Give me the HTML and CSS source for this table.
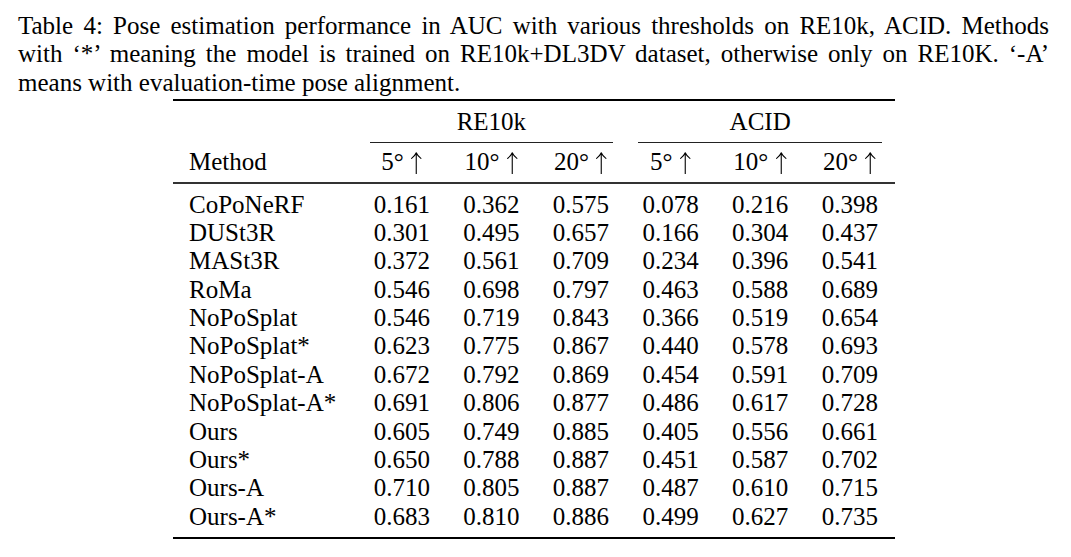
FILE: index.html
```html
<!DOCTYPE html>
<html>
<head>
<meta charset="utf-8">
<link rel="stylesheet" href="styles.css">
</head>
<body>
<div class="page">
  <p class="caption">
    <span class="line just">Table 4: Pose estimation performance in AUC with various thresholds on RE10k, ACID. Methods</span>
    <span class="line just">with ‘*’ meaning the model is trained on RE10k+DL3DV dataset, otherwise only on RE10K. ‘-A’</span>
    <span class="line">means with evaluation-time pose alignment.</span>
  </p>
  <div class="table">
    <div class="rule heavy top"></div>
    <div class="row head1">
      <div class="cell"></div>
      <div class="cell group">RE10k</div>
      <div class="cell group">ACID</div>
    </div>
    <div class="row cmids">
      <div class="cell"></div>
      <div class="cm"></div>
      <div class="cm"></div>
    </div>
    <div class="row head2">
      <div class="cell method">Method</div>
      <div class="cell num">5° <svg class="up" viewBox="0 0 12.5 22" aria-label="↑"><path d="M6.25 1.2V22M1.6 6.4C3.6 4.9 5.2 3.2 6.25 0.8C7.3 3.2 8.9 4.9 10.9 6.4"/></svg></div>
      <div class="cell num">10° <svg class="up" viewBox="0 0 12.5 22" aria-label="↑"><path d="M6.25 1.2V22M1.6 6.4C3.6 4.9 5.2 3.2 6.25 0.8C7.3 3.2 8.9 4.9 10.9 6.4"/></svg></div>
      <div class="cell num">20° <svg class="up" viewBox="0 0 12.5 22" aria-label="↑"><path d="M6.25 1.2V22M1.6 6.4C3.6 4.9 5.2 3.2 6.25 0.8C7.3 3.2 8.9 4.9 10.9 6.4"/></svg></div>
      <div class="cell num">5° <svg class="up" viewBox="0 0 12.5 22" aria-label="↑"><path d="M6.25 1.2V22M1.6 6.4C3.6 4.9 5.2 3.2 6.25 0.8C7.3 3.2 8.9 4.9 10.9 6.4"/></svg></div>
      <div class="cell num">10° <svg class="up" viewBox="0 0 12.5 22" aria-label="↑"><path d="M6.25 1.2V22M1.6 6.4C3.6 4.9 5.2 3.2 6.25 0.8C7.3 3.2 8.9 4.9 10.9 6.4"/></svg></div>
      <div class="cell num">20° <svg class="up" viewBox="0 0 12.5 22" aria-label="↑"><path d="M6.25 1.2V22M1.6 6.4C3.6 4.9 5.2 3.2 6.25 0.8C7.3 3.2 8.9 4.9 10.9 6.4"/></svg></div>
    </div>
    <div class="rule mid"></div>
    <div class="tbody">
      <div class="row"><div class="cell method">CoPoNeRF</div><div class="cell num">0.161</div><div class="cell num">0.362</div><div class="cell num">0.575</div><div class="cell num">0.078</div><div class="cell num">0.216</div><div class="cell num">0.398</div></div>
      <div class="row"><div class="cell method">DUSt3R</div><div class="cell num">0.301</div><div class="cell num">0.495</div><div class="cell num">0.657</div><div class="cell num">0.166</div><div class="cell num">0.304</div><div class="cell num">0.437</div></div>
      <div class="row"><div class="cell method">MASt3R</div><div class="cell num">0.372</div><div class="cell num">0.561</div><div class="cell num">0.709</div><div class="cell num">0.234</div><div class="cell num">0.396</div><div class="cell num">0.541</div></div>
      <div class="row"><div class="cell method">RoMa</div><div class="cell num">0.546</div><div class="cell num">0.698</div><div class="cell num">0.797</div><div class="cell num">0.463</div><div class="cell num">0.588</div><div class="cell num">0.689</div></div>
      <div class="row"><div class="cell method">NoPoSplat</div><div class="cell num">0.546</div><div class="cell num">0.719</div><div class="cell num">0.843</div><div class="cell num">0.366</div><div class="cell num">0.519</div><div class="cell num">0.654</div></div>
      <div class="row"><div class="cell method">NoPoSplat*</div><div class="cell num">0.623</div><div class="cell num">0.775</div><div class="cell num">0.867</div><div class="cell num">0.440</div><div class="cell num">0.578</div><div class="cell num">0.693</div></div>
      <div class="row"><div class="cell method">NoPoSplat-A</div><div class="cell num">0.672</div><div class="cell num">0.792</div><div class="cell num">0.869</div><div class="cell num">0.454</div><div class="cell num">0.591</div><div class="cell num">0.709</div></div>
      <div class="row"><div class="cell method">NoPoSplat-A*</div><div class="cell num">0.691</div><div class="cell num">0.806</div><div class="cell num">0.877</div><div class="cell num">0.486</div><div class="cell num">0.617</div><div class="cell num">0.728</div></div>
      <div class="row"><div class="cell method">Ours</div><div class="cell num">0.605</div><div class="cell num">0.749</div><div class="cell num">0.885</div><div class="cell num">0.405</div><div class="cell num">0.556</div><div class="cell num">0.661</div></div>
      <div class="row"><div class="cell method">Ours*</div><div class="cell num">0.650</div><div class="cell num">0.788</div><div class="cell num">0.887</div><div class="cell num">0.451</div><div class="cell num">0.587</div><div class="cell num">0.702</div></div>
      <div class="row"><div class="cell method">Ours-A</div><div class="cell num">0.710</div><div class="cell num">0.805</div><div class="cell num">0.887</div><div class="cell num">0.487</div><div class="cell num">0.610</div><div class="cell num">0.715</div></div>
      <div class="row"><div class="cell method">Ours-A*</div><div class="cell num">0.683</div><div class="cell num">0.810</div><div class="cell num">0.886</div><div class="cell num">0.499</div><div class="cell num">0.627</div><div class="cell num">0.735</div></div>
    </div>
    <div class="rule heavy bottom"></div>
  </div>
</div>
</body>
</html>
```

FILE: styles.css
```css
html, body {
  margin: 0;
  padding: 0;
  background: #fff;
}

.page {
  padding: 11.7px 22px 0 18px;
  font-family: "Liberation Serif", "Times New Roman", serif;
  font-size: 25px;
  line-height: 28.4px;
  color: #000;
}

.caption {
  margin: 0;
  width: 1031px;
}

.caption .line {
  display: block;
  white-space: nowrap;
  text-align: left;
}

.caption .line.just {
  white-space: normal;
  text-align: justify;
  text-align-last: justify;
}

.table {
  margin-left: 155px;
  width: 722px;
  display: flex;
  flex-direction: column;
}

.rule {
  background: #000;
}

.rule.heavy {
  height: 2px;
}

.rule.top {
  margin-top: 2.1px;
}

.rule.mid {
  margin-top: 7.7px;
  height: 1.5px;
  background: #333;
}

.rule.bottom {
  margin-top: 7.4px;
}

.row {
  display: grid;
  grid-template-columns: 184px repeat(6, 89.6px);
  height: 28.4px;
  box-sizing: border-box;
  padding-top: 1.5px;
}

.head1 {
  margin-top: 5.7px;
}

.group {
  grid-column: span 3;
  text-align: center;
}

.row.cmids {
  margin-top: 6.7px;
  height: 1px;
  padding-top: 0;
}

.cm {
  grid-column: span 3;
  margin: 0 12.5px;
  height: 1px;
  background: #222;
}

.head2 {
  margin-top: 3.6px;
}

.tbody {
  margin-top: 5.1px;
  display: flex;
  flex-direction: column;
}

.cell {
  white-space: nowrap;
}

.method {
  padding-left: 16px;
}

.num {
  text-align: center;
}

.up {
  width: 12.5px;
  height: 22px;
  vertical-align: -4.5px;
  fill: none;
  stroke: #000;
  stroke-width: 1.1;
  stroke-linecap: round;
  stroke-linejoin: round;
}
```
